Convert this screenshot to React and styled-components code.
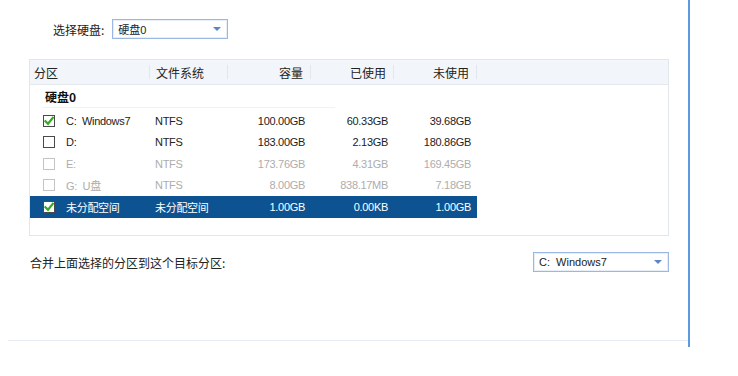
import styled, { createGlobalStyle } from "styled-components";

const GlobalStyle = createGlobalStyle`
    html, body {
        margin: 0;
        padding: 0;
        background: #ffffff;
    }
    body {
        font-family: "Liberation Sans", "Noto Sans CJK SC", sans-serif;
        font-size: 12px;
        color: #222;
    }
`;

const Panel = styled.div`
    margin-left: 8px;
    width: 680px;
    height: 347px;
    border-right: 2px solid #5b9be0;
    display: flex;
    flex-direction: column;
`;

const Content = styled.div`
    flex: 1;
    display: flex;
    flex-direction: column;
    padding: 19px 0 0 21px;
`;

const Footer = styled.div`
    height: 6px;
    border-top: 1px solid #e8edf3;
`;

const TopRow = styled.div`
    display: flex;
    align-items: center;
    gap: 8px;
    padding-left: 24px;
    height: 20px;
`;

const Label = styled.span`
    font-family: "Noto Sans CJK SC", sans-serif;
    font-size: 12px;
    color: #222;
`;

const Select = styled.div`
    box-sizing: border-box;
    width: ${(p) => p.$width}px;
    height: 20px;
    border: 1px solid #9bb7e3;
    box-shadow: inset 0 0 0 1px #e6eefa;
    display: flex;
    align-items: center;
    justify-content: space-between;
    padding: 0 6px 0 5px;
    font-size: 11px;
    font-family: "Liberation Sans", "Noto Sans CJK SC", sans-serif;
    color: #222;
`;

const Arrow = styled.span`
    width: 0;
    height: 0;
    border-left: 4px solid transparent;
    border-right: 4px solid transparent;
    border-top: 4px solid #5a86c8;
`;

const Table = styled.div`
    box-sizing: border-box;
    margin-top: 20px;
    width: 640px;
    height: 177px;
    border: 1px solid #e1e6ed;
    display: flex;
    flex-direction: column;
`;

const Columns = styled.div`
    display: grid;
    grid-template-columns: 120px 78px 83px 83px 83px;
    width: 447px;
`;

const HeaderRow = styled.div`
    height: 24px;
    background: #f2f5f9;
    border-bottom: 1px solid #e4e9ef;
`;

const HeaderCell = styled.div`
    height: 24px;
    display: flex;
    align-items: center;
    justify-content: ${(p) => (p.$right ? "flex-end" : "flex-start")};
    padding: ${(p) => (p.$right ? "0 8px 0 0" : `0 0 0 ${p.$pad || 6}px`)};
    font-family: "Noto Sans CJK SC", sans-serif;
    font-size: 12px;
    color: #222;
    position: relative;

    &::after {
        content: "";
        position: absolute;
        right: 0;
        top: 5px;
        bottom: 5px;
        width: 1px;
        background: #e2e7ee;
    }
`;

const Group = styled.div`
    margin-left: 13px;
    width: 290px;
    height: 22px;
    border-bottom: 1px solid #eef1f5;
    display: flex;
    align-items: center;
    padding-left: 2px;
    margin-bottom: 2px;
    font-family: "Noto Sans CJK SC", sans-serif;
    font-weight: bold;
    font-size: 12px;
    color: #111;
`;

const Row = styled(Columns)`
    height: 21.5px;
    background: ${(p) => (p.$selected ? "#0e5391" : "transparent")};
    color: ${(p) => (p.$selected ? "#ffffff" : p.$disabled ? "#adadad" : "#222")};
`;

const Cell = styled.div`
    display: flex;
    align-items: center;
    justify-content: ${(p) => (p.$right ? "flex-end" : "flex-start")};
    padding: ${(p) => (p.$right ? "0 6px 0 0" : `0 0 0 ${p.$pad || 5}px`)};
    font-size: 11px;
    letter-spacing: -0.3px;
    white-space: pre;
    font-family: "Liberation Sans", "Noto Sans CJK SC", sans-serif;
`;

const Box = styled.span`
    box-sizing: border-box;
    width: 12px;
    height: 12px;
    margin-right: 11px;
    border: 1.5px solid ${(p) => (p.$disabled ? "#c4c4c4" : "#4a4a4a")};
    background: #fff;
    display: inline-flex;
    align-items: center;
    justify-content: center;
    flex: none;
`;

const Bottom = styled.div`
    margin-top: 16px;
    width: 640px;
    display: flex;
    align-items: center;
    justify-content: space-between;
    padding-left: 1px;
    box-sizing: border-box;
`;

const Check = () => (
    <svg width="10" height="10" viewBox="0 0 10 10">
        <path d="M1.5 5.2 L4 7.8 L8.8 1.8" fill="none" stroke="#2fae1f" strokeWidth="2.2" strokeLinecap="square" />
    </svg>
);

const rows = [
    { name: "C:  Windows7", fs: "NTFS", cap: "100.00GB", used: "60.33GB", free: "39.68GB", checked: true },
    { name: "D:", fs: "NTFS", cap: "183.00GB", used: "2.13GB", free: "180.86GB" },
    { name: "E:", fs: "NTFS", cap: "173.76GB", used: "4.31GB", free: "169.45GB", disabled: true },
    { name: "G:  U盘", fs: "NTFS", cap: "8.00GB", used: "838.17MB", free: "7.18GB", disabled: true },
    { name: "未分配空间", fs: "未分配空间", cap: "1.00GB", used: "0.00KB", free: "1.00GB", checked: true, selected: true },
];

export default function App() {
    return (
        <>
            <GlobalStyle />
            <Panel>
                <Content>
                    <TopRow>
                        <Label>选择硬盘:</Label>
                        <Select $width={116}>
                            <span>硬盘0</span>
                            <Arrow />
                        </Select>
                    </TopRow>
                    <Table>
                        <HeaderRow>
                            <Columns>
                                <HeaderCell $pad={4}>分区</HeaderCell>
                                <HeaderCell>文件系统</HeaderCell>
                                <HeaderCell $right>容量</HeaderCell>
                                <HeaderCell $right>已使用</HeaderCell>
                                <HeaderCell $right>未使用</HeaderCell>
                            </Columns>
                        </HeaderRow>
                        <Group>硬盘0</Group>
                        {rows.map((r) => (
                            <Row key={r.name} $selected={r.selected} $disabled={r.disabled}>
                                <Cell $pad={13}>
                                    <Box $disabled={r.disabled}>{r.checked && <Check />}</Box>
                                    {r.name}
                                </Cell>
                                <Cell>{r.fs}</Cell>
                                <Cell $right>{r.cap}</Cell>
                                <Cell $right>{r.used}</Cell>
                                <Cell $right>{r.free}</Cell>
                            </Row>
                        ))}
                    </Table>
                    <Bottom>
                        <Label>合并上面选择的分区到这个目标分区:</Label>
                        <Select $width={136}>
                            <span>C:&nbsp; Windows7</span>
                            <Arrow />
                        </Select>
                    </Bottom>
                </Content>
                <Footer />
            </Panel>
        </>
    );
}
